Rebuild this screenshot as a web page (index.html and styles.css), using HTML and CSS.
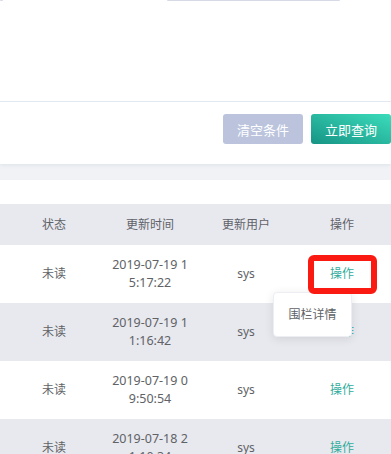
FILE: index.html
```html
<!DOCTYPE html>
<html lang="zh-CN">
  <head>
    <title>消息列表</title>
    <meta charset="utf-8">
    <link rel="stylesheet" href="styles.css">
  </head>
  <body>
    <div class="search-panel">
      <div class="field-edges">
        <span class="edge edge-left"></span>
        <span class="edge edge-mid"></span>
      </div>
      <div class="divider"></div>
      <div class="search-actions">
        <button class="btn btn-clear">清空条件</button>
        <button class="btn btn-query">立即查询</button>
      </div>
    </div>

    <div class="gap-band"></div>

    <div class="table-card">
      <div class="grid-table">
        <div class="row head">
          <div class="cell"></div>
          <div class="cell">状态</div>
          <div class="cell">更新时间</div>
          <div class="cell">更新用户</div>
          <div class="cell">操作</div>
        </div>
        <div class="row">
          <div class="cell"></div>
          <div class="cell">未读</div>
          <div class="cell date">2019-07-19 15:17:22</div>
          <div class="cell">sys</div>
          <div class="cell op">
            <span class="link">操作</span>
            <span class="mark"></span>
            <div class="dropdown">围栏详情</div>
          </div>
        </div>
        <div class="row stripe">
          <div class="cell"></div>
          <div class="cell">未读</div>
          <div class="cell date">2019-07-19 11:16:42</div>
          <div class="cell">sys</div>
          <div class="cell op"><span class="link">操作</span></div>
        </div>
        <div class="row">
          <div class="cell"></div>
          <div class="cell">未读</div>
          <div class="cell date">2019-07-19 09:50:54</div>
          <div class="cell">sys</div>
          <div class="cell op"><span class="link">操作</span></div>
        </div>
        <div class="row stripe">
          <div class="cell"></div>
          <div class="cell">未读</div>
          <div class="cell date">2019-07-18 21:10:34</div>
          <div class="cell">sys</div>
          <div class="cell op"><span class="link">操作</span></div>
        </div>
      </div>
    </div>
  </body>
</html>
```

FILE: styles.css
```css
html, body {
  margin: 0;
  padding: 0;
  background: #fff;
  overflow: hidden;
}

body {
  font-family: "Noto Sans", "Noto Sans CJK SC", sans-serif;
  font-size: 12px;
  color: #606266;
}

.search-panel {
  height: 164px;
  background: #fff;
  position: relative;
  z-index: 1;
  box-shadow: 0 1px 4px rgba(40, 110, 120, 0.10);
}

.field-edges {
  display: flex;
  height: 1px;
}
.edge {
  display: block;
  height: 1px;
  background: #d6dae6;
  border-radius: 0 0 2px 2px;
}
.edge-left { width: 3px; }
.edge-mid { width: 173px; margin-left: 164px; }

.divider {
  height: 1px;
  margin-top: 100px;
  background: #e3e9f0;
}

.search-actions {
  display: flex;
  justify-content: flex-end;
  gap: 8px;
  margin-top: 12px;
}

.btn {
  width: 80px;
  height: 30px;
  border: 0;
  border-radius: 3px;
  color: #fff;
  font-family: "Noto Sans CJK SC", sans-serif;
  font-size: 13px;
  padding: 0;
}
.btn-clear { background: #bbc4dc; }
.btn-query { background: linear-gradient(to top right, #179485, #3bdcbb); }

.gap-band {
  height: 16px;
  background: #f1f2f6;
}

.table-card {
  background: #fff;
  padding-top: 24px;
}

.row {
  display: grid;
  grid-template-columns: 6px 96px 96px 96px 96px;
  height: 58px;
  background: #fff;
}
.row.head {
  height: 41px;
  background: #e8e9ef;
}
.row.stripe { background: #e8e9ef; }

.cell {
  display: flex;
  align-items: center;
  justify-content: center;
  text-align: center;
  padding: 0 9px;
  line-height: 18px;
  word-break: break-all;
  min-width: 0;
}
.row .cell:first-child { padding: 0; }
.row.head .cell { color: #5f6269; }

.date { font-size: 12.5px; }

.op { position: relative; }
.link { color: #30ad9c; }

.mark {
  position: absolute;
  left: 14px;
  top: 10px;
  width: 57px;
  height: 27px;
  border: 6px solid #fa1a12;
  border-radius: 6px;
  z-index: 3;
}

.dropdown {
  position: absolute;
  left: -21px;
  top: 47px;
  width: 79px;
  height: 45px;
  box-sizing: border-box;
  display: flex;
  align-items: center;
  justify-content: center;
  background: #fff;
  border: 1px solid #eceef3;
  border-radius: 4px;
  box-shadow: 0 2px 10px rgba(0, 0, 0, 0.10);
  color: #606266;
  z-index: 2;
}
```
